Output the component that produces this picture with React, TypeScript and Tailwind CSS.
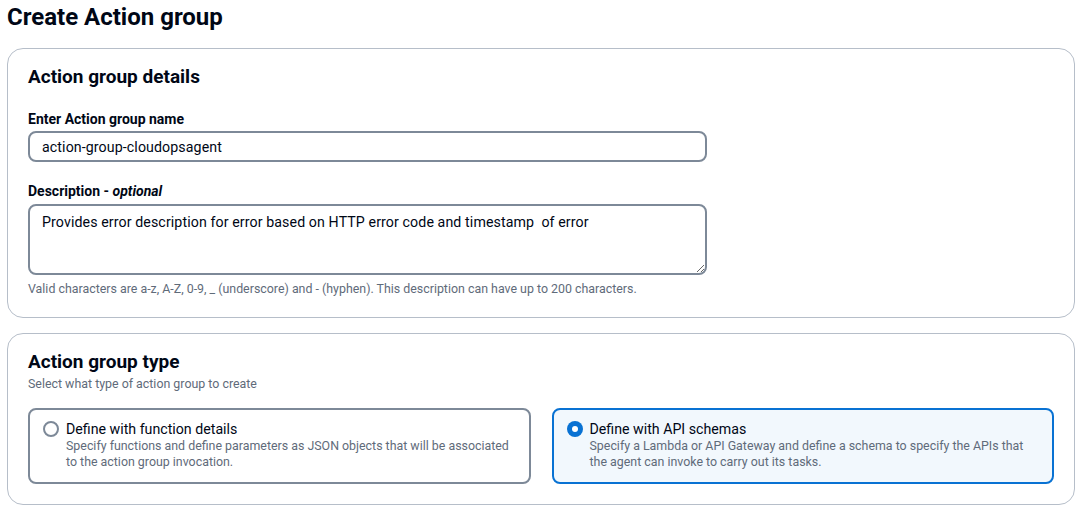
import { useState } from 'react';

const font = { fontFamily: 'Roboto, "Noto Sans", Arial, sans-serif' };

type Option = { id: string; title: string; description: string };

const options: Option[] = [
  {
    id: 'function',
    title: 'Define with function details',
    description:
      'Specify functions and define parameters as JSON objects that will be associated to the action group invocation.',
  },
  {
    id: 'api',
    title: 'Define with API schemas',
    description:
      'Specify a Lambda or API Gateway and define a schema to specify the APIs that the agent can invoke to carry out its tasks.',
  },
];

function Radio({ checked }: { checked: boolean }) {
  return checked ? (
    <span className="mt-[1px] flex h-[16px] w-[16px] shrink-0 items-center justify-center rounded-full bg-[#0972d3]">
      <span className="h-[6px] w-[6px] rounded-full bg-white" />
    </span>
  ) : (
    <span className="mt-[1px] h-[16px] w-[16px] shrink-0 rounded-full border-2 border-[#7d8998] bg-white" />
  );
}

export default function App() {
  const [name, setName] = useState('action-group-cloudopsagent');
  const [desc, setDesc] = useState(
    'Provides error description for error based on HTTP error code and timestamp  of error'
  );
  const [type, setType] = useState('api');

  return (
    <div className="min-h-[512px] bg-white pl-[7px] pr-[11px] text-[#000716]" style={font}>
      <h1 className="pt-[2px] text-[24px] font-bold leading-[30px]">Create Action group</h1>

      <section className="mt-[16px] rounded-[16px] border border-[#b6bec9] px-[20px] pb-[20px] pt-[16px]">
        <h2 className="text-[19px] font-bold leading-[24px]">Action group details</h2>

        <label className="mt-[20px] block text-[14px] font-bold leading-[20px]">Enter Action group name</label>
        <input
          value={name}
          onChange={(e) => setName(e.target.value)}
          className="mt-[2px] block h-[31px] w-[679px] rounded-[8px] border-2 border-[#7d8998] px-[12px] text-[14.2px] tracking-[0.1px] outline-none"
        />

        <label className="mt-[19px] block text-[14px] font-bold leading-[20px]">
          Description - <i>optional</i>
        </label>
        <textarea
          value={desc}
          onChange={(e) => setDesc(e.target.value)}
          className="mt-[3px] block h-[71px] w-[679px] rounded-[8px] border-2 border-[#7d8998] px-[12px] py-[6px] text-[14.2px] leading-[20px] tracking-[0.1px] outline-none"
        />
        <p className="mt-[6px] text-[12.4px] leading-[16px] text-[#5f6b7a]">
          Valid characters are a-z, A-Z, 0-9, _ (underscore) and - (hyphen). This description can have up to 200
          characters.
        </p>
      </section>

      <section className="mt-[15px] rounded-[16px] border border-[#b6bec9] px-[20px] pb-[20px] pt-[16px]">
        <h2 className="text-[19px] font-bold leading-[24px]">Action group type</h2>
        <p className="mt-[2px] text-[12.4px] leading-[16px] text-[#5f6b7a]">Select what type of action group to create</p>

        <div className="mt-[16px] grid grid-cols-2 gap-[21px]">
          {options.map((o) => {
            const checked = type === o.id;
            return (
              <button
                key={o.id}
                onClick={() => setType(o.id)}
                className={`flex h-[76px] items-start gap-[7px] rounded-[8px] border-2 pl-[13px] pr-[16px] pt-[10px] text-left ${
                  checked ? 'border-[#0972d3] bg-[#f2f8fd]' : 'border-[#7d8998] bg-white'
                }`}
              >
                <Radio checked={checked} />
                <span className="block">
                  <span className="block text-[14.2px] leading-[18px]">{o.title}</span>
                  <span className="block text-[12.4px] leading-[16px] text-[#5f6b7a]">{o.description}</span>
                </span>
              </button>
            );
          })}
        </div>
      </section>
    </div>
  );
}
